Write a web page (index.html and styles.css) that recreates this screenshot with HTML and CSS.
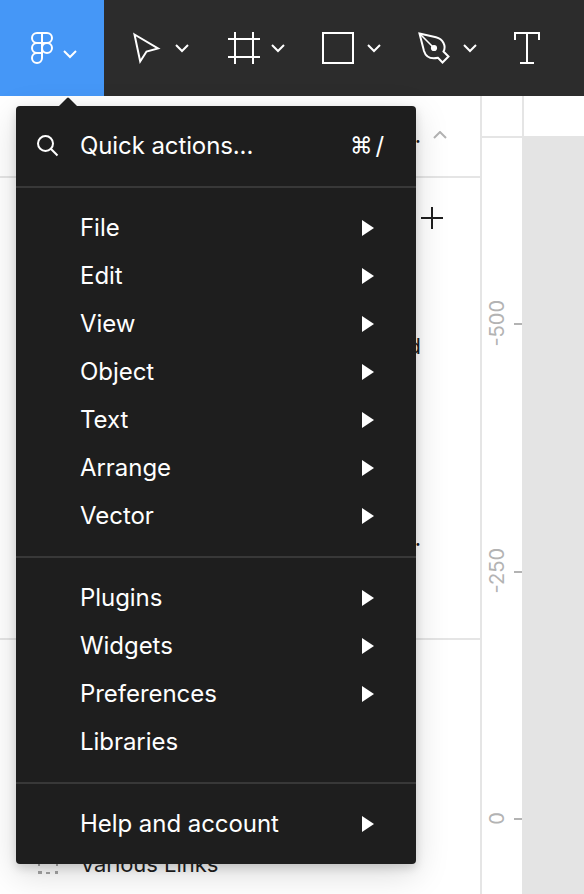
FILE: index.html
```html
<!DOCTYPE html>
<html lang="en">
<head>
<meta charset="utf-8">
<title>Editor</title>
<link rel="stylesheet" href="styles.css">
</head>
<body>
<div class="app">
  <header class="toolbar">
    <div class="tool tool-main">
      <svg width="104" height="96" viewBox="0 0 104 96">
        <path d="M42 33H37a5 5 0 0 0 0 10h5zM42 33h5a5 5 0 0 1 0 10h-5zM42 43H37a5 5 0 0 0 0 10h5zM42 53H37a5 5 0 1 0 5 5z"/>
        <circle cx="47" cy="48" r="5"/>
        <path d="M64 51l6 6 6-6"/>
      </svg>
    </div>
    <div class="tool">
      <svg width="96" height="96" viewBox="104 0 96 96">
        <path d="M134.500 34.500L158 48.500L146.500 51.500L140.200 61.500Z"/>
        <path d="M176 45l6 6 6-6"/>
      </svg>
    </div>
    <div class="tool">
      <svg width="96" height="96" viewBox="200 0 96 96">
        <path d="M235 32v32M253 32v32M228 39h32M228 57h32"/>
        <path d="M272 45l6 6 6-6"/>
      </svg>
    </div>
    <div class="tool">
      <svg width="96" height="96" viewBox="296 0 96 96">
        <path d="M323 33h30v30h-30zM368 45l6 6 6-6"/>
      </svg>
    </div>
    <div class="tool">
      <svg width="104" height="96" viewBox="392 0 104 96">
        <path d="M419.500 33.500L436 37.300C443 39 446.500 46 443.500 51.500L448.500 56.500L442.500 62.500L438 57.800C431 59.300 426 57.500 424 51Z"/>
        <path class="thin" d="M419.500 33.500L434 48"/>
        <circle class="solid" cx="434" cy="48" r="3.100"/>
        <path d="M464 45l6 6 6-6"/>
      </svg>
    </div>
    <div class="tool">
      <svg width="88" height="96" viewBox="496 0 88 96">
        <path d="M515 40V33h24v7M527 33v30M520 63h14"/>
      </svg>
    </div>
  </header>

  <main class="workspace">
    <aside class="panel">
      <div class="panel-head">
        <span class="file-name">.</span>
        <svg width="14" height="8" viewBox="0 0 14 8"><path class="muted" d="M1 7l6-6 6 6"/></svg>
      </div>
      <div class="pages">
        <div class="pages-head">
          <svg width="22" height="22" viewBox="0 0 22 22"><path class="dark" d="M11 0v22M0 11h22"/></svg>
        </div>
        <div class="page-row page-row-a">d</div>
        <div class="page-row page-row-b">.</div>
      </div>
      <div class="layers">
        <div class="layer">
          <svg width="20" height="20" viewBox="0 0 20 20"><path class="frame" d="M0 3V1H3M8 1h4M17 1h2V3M1 8v4M19 8v4M0 18h3v1H0M8 19h4M17 18h3v1H17"/></svg>
          <span>Various Links</span>
        </div>
      </div>
    </aside>
    <div class="ruler">
      <div class="corner"></div>
      <div class="mark"><span>-500</span><i></i></div>
      <div class="mark"><span>-250</span><i></i></div>
      <div class="mark"><span>0</span><i></i></div>
    </div>
    <div class="stage">
      <div class="ruler-top"></div>
      <div class="canvas"></div>
    </div>
  </main>

  <nav class="menu">
    <svg class="caret" width="20" height="10" viewBox="0 0 20 10"><path d="M0 10L9 1Q10 0 11 1L20 10Z"/></svg>
    <div class="group">
      <div class="item quick">
        <svg width="22" height="22" viewBox="0 0 22 22"><circle cx="8.500" cy="8.500" r="7.500"/><path d="M13.800 13.800L20.500 20.500"/></svg>
        <span>Quick actions...</span>
        <kbd><span class="cmd">⌘</span><span>/</span></kbd>
      </div>
    </div>
    <div class="group">
      <div class="item sub">File</div>
      <div class="item sub">Edit</div>
      <div class="item sub">View</div>
      <div class="item sub">Object</div>
      <div class="item sub">Text</div>
      <div class="item sub">Arrange</div>
      <div class="item sub">Vector</div>
    </div>
    <div class="group">
      <div class="item sub">Plugins</div>
      <div class="item sub">Widgets</div>
      <div class="item sub">Preferences</div>
      <div class="item">Libraries</div>
    </div>
    <div class="group">
      <div class="item sub">Help and account</div>
    </div>
  </nav>
</div>
</body>
</html>
```
FILE: styles.css
```css
* { box-sizing: border-box; }

body {
  margin: 0;
  font-family: Inter, "Liberation Sans", sans-serif;
  color: #1e1e1e;
  background: #fff;
}

svg {
  display: block;
  flex: none;
  fill: none;
  stroke: #fff;
  stroke-width: 2;
}

.app {
  position: relative;
  display: flex;
  flex-direction: column;
  width: 584px;
  height: 894px;
  overflow: hidden;
}

.toolbar { display: flex; height: 96px; flex: none; background: #2c2c2c; }
.tool-main { background: #4597f7; }
.thin { stroke-width: 1.6; }
.solid { fill: #fff; stroke: none; }

.workspace { display: flex; flex: 1; min-height: 0; }

.panel {
  width: 482px;
  border-right: 2px solid #e5e5e5;
  font-size: 22px;
  letter-spacing: -0.04px;
  overflow: hidden;
}
.panel-head {
  display: flex;
  align-items: center;
  justify-content: flex-end;
  gap: 12px;
  height: 82px;
  padding-right: 33px;
  padding-bottom: 2px;
  border-bottom: 2px solid #e5e5e5;
}
.file-name { line-height: 28px; }
.panel-head svg { margin-bottom: 1px; }
.muted { stroke: #b3b3b3; }
.dark { stroke: #1e1e1e; }
.pages { height: 462px; border-bottom: 2px solid #e5e5e5; }
.pages-head { display: flex; justify-content: flex-end; padding: 29px 37px 0 0; }
.page-row { padding-right: 59px; text-align: right; line-height: 48px; }
.page-row-a { margin-top: 93px; }
.page-row-b { margin-top: 144px; }
.layers { padding-top: 200px; }
.layer {
  display: flex;
  align-items: center;
  gap: 22px;
  height: 48px;
  padding-left: 38px;
  white-space: nowrap;
}
.layer svg { margin-bottom: 1px; }
.frame { stroke: #a6a6a6; }

.ruler { width: 40px; color: #b3b3b3; font-size: 20px; }
.corner { height: 42px; margin-bottom: 62.500px; border-bottom: 2px solid #e5e5e5; }
.mark {
  display: flex;
  align-items: center;
  justify-content: space-between;
  height: 247.500px;
  padding-left: 3px;
}
.mark span { margin-bottom: 2px; writing-mode: vertical-rl; transform: rotate(180deg); line-height: 24px; }
.mark i { width: 8px; height: 2px; background: #b3b3b3; }

.stage { display: flex; flex-direction: column; flex: 1; }
.ruler-top { height: 40px; border-left: 2px solid #e5e5e5; }
.canvas { flex: 1; background: #e4e4e4; }

.menu {
  position: absolute;
  left: 16px;
  top: 106px;
  width: 400px;
  border-radius: 4px;
  background: #1e1e1e;
  color: #fff;
  font-size: 24px;
  letter-spacing: -0.05px;
  box-shadow: 0 10px 34px rgba(0, 0, 0, 0.15), 0 4px 10px rgba(0, 0, 0, 0.15);
}
.caret {
  position: absolute;
  left: 42px;
  top: -9px;
  fill: #1e1e1e;
  stroke: none;
}
.group { padding: 16px 0; }
.group + .group { border-top: 2px solid #383838; }
.item {
  display: flex;
  align-items: center;
  height: 48px;
  padding: 0 42px 0 64px;
  line-height: 48px;
}
.sub { justify-content: space-between; }
.sub::after {
  content: "";
  border-left: 12px solid #fff;
  border-top: 8px solid transparent;
  border-bottom: 8px solid transparent;
}
.quick { padding: 0 32px 0 21px; }
.quick > span { margin-left: 21px; letter-spacing: -0.1px; }
kbd { display: flex; gap: 3px; margin-left: auto; font: inherit; }
.cmd { font-size: 22.500px; line-height: 46px; }
```
